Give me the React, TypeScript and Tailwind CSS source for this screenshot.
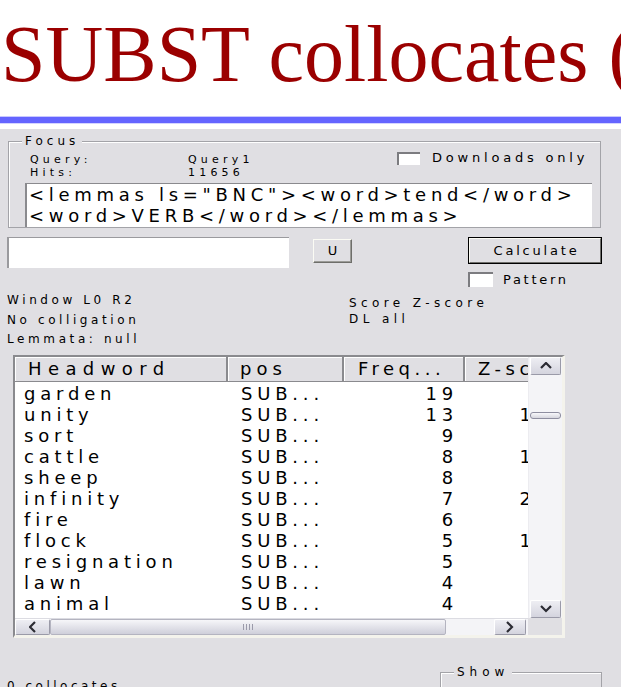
import React from "react";

const rows: [string, string, string][] = [
  ["garden", "19", "9.12"],
  ["unity", "13", "15.40"],
  ["sort", "9", "6.33"],
  ["cattle", "8", "11.27"],
  ["sheep", "8", "8.41"],
  ["infinity", "7", "24.97"],
  ["fire", "6", "7.55"],
  ["flock", "5", "10.62"],
  ["resignation", "5", "9.08"],
  ["lawn", "4", "5.80"],
  ["animal", "4", "3.21"],
];

function Chevron({ dir }: { dir: "up" | "down" | "left" | "right" }) {
  const pts: Record<string, string> = {
    up: "1,6 6,1 11,6",
    down: "1,1 6,6 11,1",
    left: "6,1 1,6 6,11",
    right: "1,1 6,6 1,11",
  };
  const horiz = dir === "left" || dir === "right";
  return (
    <svg
      width={horiz ? 8 : 12}
      height={horiz ? 12 : 8}
      viewBox={horiz ? "0 0 8 12" : "0 0 12 8"}
    >
      <polyline
        points={pts[dir]}
        fill="none"
        stroke="#2b2b33"
        strokeWidth="2.2"
      />
    </svg>
  );
}

function SBtn({ dir, cls }: { dir: "up" | "down" | "left" | "right"; cls: string }) {
  return (
    <div
      className={
        "flex items-center justify-center rounded-[2px] border border-t-[#ffffff] border-l-[#ffffff] border-r-[#9a9aa8] border-b-[#9a9aa8] bg-gradient-to-b from-[#eeeef3] to-[#d4d4de] " +
        cls
      }
    >
      <Chevron dir={dir} />
    </div>
  );
}

export default function App() {
  return (
    <div className="w-[621px] h-[687px] overflow-hidden bg-white flex flex-col font-['DejaVu_Sans',sans-serif] text-black">
      {/* Title */}
      <div className="h-[116px] shrink-0 overflow-hidden pt-[14px] pl-[1px] whitespace-nowrap font-['Liberation_Serif',serif] text-[80px] leading-none text-[#9b0000]">
        SUBST collocates (tend VERB)
      </div>
      <div className="h-px shrink-0 bg-[#c8c8ff]" />
      <div className="h-[6px] shrink-0 bg-[#6464ff]" />
      <div className="h-px shrink-0 bg-[#d4d4ff]" />
      <div className="h-[5px] shrink-0 bg-white" />

      {/* Panel */}
      <div className="flex-1 bg-[#e0dfe3] flex flex-col">
        {/* Focus box */}
        <div className="relative ml-[8px] mt-[12px] w-[593px] h-[87px] border border-[#a3a3a8] shadow-[inset_1px_1px_0_#ffffff]">
          <div className="absolute -top-[9px] left-[13px] px-[3px] bg-[#e0dfe3] text-[12px] leading-[16px] tracking-[4px]">
            Focus
          </div>
          <div className="flex h-[41px] text-[11px] leading-[12.5px] tracking-[4.2px] text-black">
            <div className="w-[179px] pl-[21px] pt-[12px]">
              <div>Query:</div>
              <div>Hits:</div>
            </div>
            <div className="w-[209px] pt-[12px]">
              <div>Query1</div>
              <div>11656</div>
            </div>
            <div className="flex items-start">
              <div className="mt-[10px] w-[23px] h-[13px] bg-white border-t-2 border-l-2 border-[#7c7c80]" />
              <div className="ml-[12px] mt-[8px] text-[13px] leading-[16px] tracking-[3.8px]">
                Downloads only
              </div>
            </div>
          </div>
          <div className="ml-[16px] w-[567px] h-[44px] bg-white border-l-2 border-t border-[#8a8a8e] pl-[2px] text-[18px] leading-[21px] tracking-[4.7px] whitespace-nowrap overflow-hidden">
            <div>{'<lemmas ls="BNC"><word>tend</word>'}</div>
            <div>{"<word>VERB</word></lemmas>"}</div>
          </div>
        </div>

        {/* Input row */}
        <div className="flex items-start mt-[9px] h-[31px]">
          <div className="ml-[7px] w-[282px] h-[31px] bg-white border-l-2 border-t border-[#9a9a9e]" />
          <div className="ml-[24px] mt-[2px] w-[39px] h-[24px] flex items-center justify-center bg-[#e0dfe3] border border-t-[#fbfbf4] border-l-[#fbfbf4] border-r-[#6e6e6a] border-b-[#6e6e6a] shadow-[inset_-1px_-1px_0_#9c9c98] text-[13px] tracking-[3px] pl-[3px]">
            U
          </div>
          <div className="ml-[116px] w-[134px] h-[27px] border border-black">
            <div className="w-full h-full flex items-center justify-center bg-[#e0dfe3] border border-t-[#fbfbf4] border-l-[#fbfbf4] border-r-[#6e6e6a] border-b-[#6e6e6a] text-[13px] tracking-[2.8px] pl-[3px]">
              Calculate
            </div>
          </div>
        </div>

        {/* Pattern row */}
        <div className="flex items-center mt-[4px] h-[15px]">
          <div className="ml-[468px] w-[25px] h-[15px] bg-white border-t-2 border-l-2 border-[#7c7c80]" />
          <div className="ml-[10px] text-[13px] leading-[15px] tracking-[2.7px]">Pattern</div>
        </div>

        {/* Info row */}
        <div className="flex text-[12px] tracking-[3.6px] text-black">
          <div className="w-[349px] pl-[7px] pt-[4px] leading-[19.5px]">
            <div>Window L0 R2</div>
            <div>No colligation</div>
            <div>Lemmata: null</div>
          </div>
          <div className="pt-[9px] leading-[15.5px] tracking-[4.4px]">
            <div>Score Z-score</div>
            <div>DL all</div>
          </div>
        </div>

        {/* Table */}
        <div className="ml-[13px] mt-[5.5px] w-[552px] h-[283px] shrink-0 border-t-2 border-l-2 border-r-[3px] border-b-[3px] border-t-[#8a8a8e] border-l-[#8a8a8e] border-r-[#f4f3ec] border-b-[#f4f3ec]">
          <div className="grid grid-cols-[513px_34px] grid-rows-[261px_17px] w-[547px] h-[278px]">
            {/* Viewport */}
            <div className="overflow-hidden bg-white">
              <div className="w-[590px] text-[18px] tracking-[4.8px]">
                <div className="grid grid-cols-[213px_116px_121px_140px] h-[25px] bg-[#e0dfe3] leading-[24px]">
                  <div className="pl-[13px] tracking-[6.4px] border-r-2 border-r-[#8a8a8e] border-b border-b-[#8a8a8e] shadow-[inset_1px_1px_0_#ffffff]">
                    Headword
                  </div>
                  <div className="pl-[12px] tracking-[5px] border-r-2 border-r-[#8a8a8e] border-b border-b-[#8a8a8e] shadow-[inset_1px_1px_0_#ffffff]">
                    pos
                  </div>
                  <div className="pl-[14px] tracking-[4.5px] border-r-2 border-r-[#8a8a8e] border-b border-b-[#8a8a8e] shadow-[inset_1px_1px_0_#ffffff]">
                    Freq...
                  </div>
                  <div className="pl-[13px] tracking-[4.5px] border-b border-b-[#8a8a8e] shadow-[inset_1px_1px_0_#ffffff] whitespace-nowrap">
                    Z-score
                  </div>
                </div>
                <div className="pt-[1px]">
                  {rows.map(([w, f, z]) => (
                    <div
                      key={w}
                      className="grid grid-cols-[213px_116px_121px_140px] h-[21px] leading-[21px] whitespace-nowrap"
                    >
                      <div className="pl-[9px]">{w}</div>
                      <div className="pl-[13px]">SUB...</div>
                      <div className="text-right pr-[7px]">{f}</div>
                      <div className="text-right pr-[10px]">{z}</div>
                    </div>
                  ))}
                </div>
              </div>
            </div>

            {/* Vertical scrollbar */}
            <div className="flex flex-col bg-[#f4f4f7] border-l border-[#ececf0]">
              <SBtn dir="up" cls="ml-[1px] w-[31px] h-[18px]" />
              <div className="flex-1 relative">
                <div className="mt-[37px] ml-[1px] w-[31px] h-[7px] rounded-[3px] border border-[#8e8ea0] bg-gradient-to-b from-[#f8f8fb] to-[#d6d6de]" />
              </div>
              <SBtn dir="down" cls="ml-[1px] w-[31px] h-[18px]" />
            </div>

            {/* Horizontal scrollbar */}
            <div className="flex items-stretch bg-[#f4f4f7] border-t border-[#dcdce2]">
              <SBtn dir="left" cls="w-[35px]" />
              <div className="w-[396px] flex items-center justify-center gap-[2px] rounded-[2px] border border-[#b4b4c0] bg-gradient-to-b from-[#f6f6f9] to-[#cfcfda]">
                <div className="w-px h-[6px] bg-[#9a9aaa]" />
                <div className="w-px h-[6px] bg-[#9a9aaa]" />
                <div className="w-px h-[6px] bg-[#9a9aaa]" />
                <div className="w-px h-[6px] bg-[#9a9aaa]" />
              </div>
              <div className="w-[48px]" />
              <SBtn dir="right" cls="w-[32px]" />
            </div>

            {/* Corner */}
            <div className="bg-[#e0dfe3]" />
          </div>
        </div>

        {/* Bottom row */}
        <div className="flex items-start">
          <div className="w-[440px] pl-[7px] pt-[38px] text-[12px] leading-[20px] tracking-[3.5px]">
            0 collocates
          </div>
          <div className="relative mt-[34px] w-[162px] h-[40px] border border-[#a3a3a8] shadow-[inset_1px_1px_0_#ffffff]">
            <div className="absolute -top-[9px] left-[13px] px-[3px] bg-[#e0dfe3] text-[12px] leading-[16px] tracking-[5px]">
              Show
            </div>
          </div>
        </div>
      </div>
    </div>
  );
}
